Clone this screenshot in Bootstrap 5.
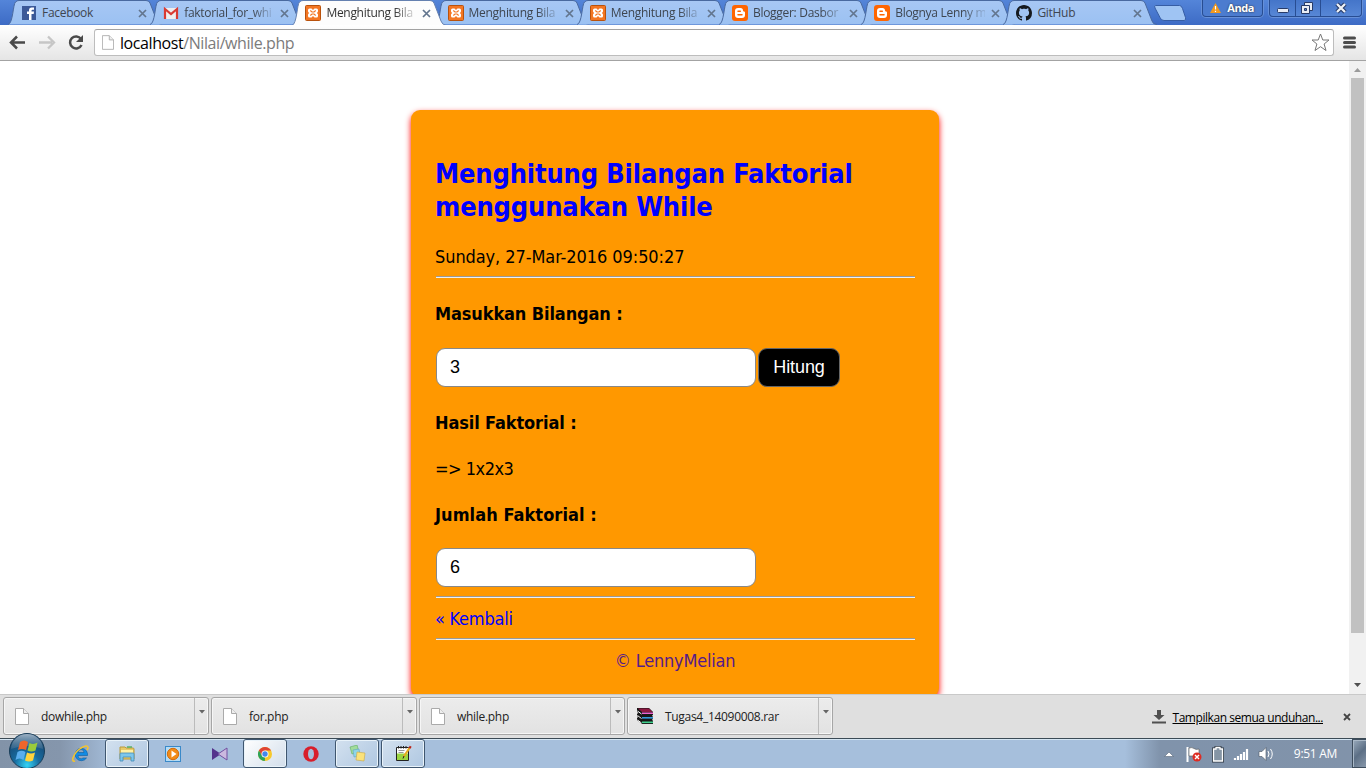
<!DOCTYPE html>
<html lang="id">
<head>
<meta charset="utf-8">
<title>Menghitung Bilangan Faktorial</title>
<link rel="stylesheet" href="https://cdn.jsdelivr.net/npm/bootstrap@5.3.0/dist/css/bootstrap.min.css">
<style>
body{width:1366px;height:768px;overflow:hidden;font-family:"Open Sans","Noto Sans",sans-serif;font-size:12px;line-height:16px;color:#000;background:#fff}
svg{display:block;flex:none}
.tabstrip{height:25px;background:linear-gradient(#5485d9,#3d6bc5);padding-left:8px}
.tab{width:158px;height:25px;margin-right:-15.8px;position:relative;padding:5px 0 0 13px;color:#3e4650}
.tab .shape{position:absolute;left:0;top:0;z-index:0}
.tab .shape path{fill:url(#tabfill);stroke:#49699f}
.tab.current{z-index:3;color:#333}
.tab.current .shape path{fill:#fdfdfd;stroke:#6581b0}
.tab>*:not(.shape){position:relative}
.tabname{width:91px;margin-left:4px;padding-left:1px;white-space:nowrap;letter-spacing:-.3px}
.fades{-webkit-mask-image:linear-gradient(90deg,#000 76%,rgba(0,0,0,.2) 97%)}
.cross{margin:4px 0 0 6px}
.anda{width:61px;height:17px;border:1px solid #284d92;border-top:0;border-radius:0 0 4px 4px;background:#4c7ccf;box-shadow:0 0 0 1px #6690d8;color:#fff;font-weight:700;font-size:11px;margin-left:16px;gap:6px;letter-spacing:-.4px;text-shadow:0 0 2px #222}
.winctl{width:93px;height:17px;border:1px solid #284d92;border-top:0;border-radius:0 0 4px 4px;background:linear-gradient(#4475c9,#5787d6);box-shadow:0 0 0 1px #6690d8;margin-left:6px}
.toolbar{height:36px;background:linear-gradient(#fff,#e5e5e5);border-bottom:1px solid #a3a3a3;padding:4px 9px 0 8px}
.omnibox{width:1240px;height:27px;border:1px solid #bdbdbd;border-top-color:#a2a2a2;border-radius:3px;background:#fff;margin-left:10px;padding:0 3px 0 7px;font-size:16px;letter-spacing:-.42px}
.address{margin-left:6px}
.urlpath{color:#7c7c7c}
.viewport{height:633px;overflow:hidden}
.scroller{width:17px;background:#f1f1f1}
.thumb{width:13px;height:555px;background:#c1c1c1}
.panel{width:528px;height:587px;margin:49px 0 0 411px;padding:47px 24px 0;background:#ff9800;border-radius:9px;box-shadow:0 3px 6px #f00;font:18px/22px "DejaVu Sans Condensed","DejaVu Sans",sans-serif;font-stretch:condensed}
.panel h1{font-size:27px;line-height:33px;font-weight:700;color:#00f;margin:0 0 23px;letter-spacing:-.16px}
.panel p{margin:0 0 24px;height:22px;white-space:nowrap;letter-spacing:-.22px}
.panel p.stamp{letter-spacing:-.08px}
.panel p.fw-bold{letter-spacing:-.12px}
.panel p.sum{letter-spacing:.06px;margin-bottom:22px}
.panel p.product{letter-spacing:-.5px}
.panel .rule{height:2px;background:linear-gradient(#9a9a9a 50%,#eee 50%);margin:8px 0 10px 1px}
.panel .rule.first{margin-bottom:25px}
.panel .rule.second{margin-top:9px}
.panel a{text-decoration:none;color:#00f}
.panel a.visited{color:#551a8b}
.field{width:320px;height:39px;border:1px solid #888;border-radius:9px;padding:0 13px;background:#fff;font:18px "Liberation Sans",sans-serif;color:#000;margin-left:1px}
.hit{width:82px;height:39px;border:1px solid #666;border-radius:9px;background:#000;color:#fff;font:18px "Liberation Sans",sans-serif;padding:0;margin-left:2px;letter-spacing:-.1px}
.shelf{height:44px;background:#dfdfdf;border-top:1px solid #c9c9c9;padding-left:3px;font-size:12px}
.dl{width:206px;height:38px;margin:2px 2px 0 0;border:1px solid #a6a6a6;border-radius:3px;background:linear-gradient(#ececec,#e2e2e2);box-shadow:inset 0 0 0 1px #f6f6f6;padding-left:11px;letter-spacing:-.3px;color:#222}
.dl .fname{padding:2px 0 0 12px}
.dl .arrow{width:14px;height:36px;border-left:1px solid #bbb;padding:12px 0 0 4px}
.showall{margin:2px 20px 0 2px;letter-spacing:-.45px}
.shut{margin-right:15px}
.taskbar{height:30px;border-top:1px solid #3b4a55;background:linear-gradient(90deg,#8293a8 0,#8596ac 60px,#a6bfdc 115px,#a6bfdc 1125px,#8093ab 1160px,#8193aa);box-shadow:inset 0 1px #d5e6f3}
.task{width:44px;height:29px;margin-right:2px}
.task.open{border:1px solid #3f566f;border-radius:3px;background:linear-gradient(135deg,#d3e1ef,#afc7e1);box-shadow:inset 0 0 0 1px #e9f3fa}
.task.front{background:linear-gradient(135deg,#fff,#d2deeb)}
.orb{margin:-7px 13px 0 8px;position:relative}
.clock{margin:0 15px 0 20px;letter-spacing:-.3px}
.peek{width:14px;height:29px;border:1px solid #3d4d5d;border-right:0;background:linear-gradient(135deg,#9aabbd,#5c6f85 50%,#8898ab);box-shadow:inset 1px 1px #a9b8c7}
</style>
</head>
<body class="d-flex flex-column">
<svg width="0" height="0" class="position-absolute">
<defs>
<linearGradient id="tabfill" x2="0" y2="1"><stop stop-color="#a7c7f4"/><stop offset="1" stop-color="#9bc1f2"/></linearGradient>
<radialGradient id="orbfill" cy=".9" r=".9"><stop stop-color="#35d4f5"/><stop offset=".4" stop-color="#176b9f"/><stop offset="1" stop-color="#183e66"/></radialGradient>
<linearGradient id="gloss" x2="0" y2="1"><stop stop-color="#e3eef5"/><stop offset="1" stop-color="#67869f" stop-opacity=".5"/></linearGradient>
<symbol id="cross" viewBox="0 0 9 9"><path d="M1 1l7 7M8 1l-7 7" stroke="#62758e" stroke-width="1.7"/></symbol>
<symbol id="xampp" viewBox="0 0 16 16"><rect x=".5" y=".5" width="15" height="15" rx="1" fill="#f37623" stroke="#b9520c"/><path d="M4.500 3.500h2L8 5l1.500-1.500h2q1.500 0 1.500 1.500v1.500L12 8l1 1.500V11q0 1.500-1.500 1.500h-2L8 11l-1.500 1.500h-2Q3 12.500 3 11V9.500L4 8 3 6.500V5q0-1.500 1.500-1.500z" fill="#fff"/><path d="M5.300 5.500L7 7h2l1.700-1.500M5.300 10.500L7 9h2l1.700 1.500" fill="none" stroke="#f37623" stroke-width="1.100"/></symbol>
<symbol id="blogger" viewBox="0 0 16 16"><rect width="16" height="16" rx="3" fill="#ff6500"/><path d="M6 3h2.500Q11 3 11 5.500q0 1 1 1t1 1V10q0 3-3 3H6q-3 0-3-3V6q0-3 3-3z" fill="#fff"/><path d="M6 6.200h2.300M6 9.800h4" stroke="#ff6500" stroke-width="1.500" stroke-linecap="round"/></symbol>
<symbol id="page" viewBox="0 0 14 17"><path d="M.5 .5h8l5 5v11H.5z" fill="#fff" stroke="#aaa"/><path d="M8.500 .5v5h5" fill="#eee" stroke="#aaa"/></symbol>
<symbol id="down" viewBox="0 0 6 4"><path d="M0 0h6L3 3.500z" fill="#666"/></symbol>
</defs>
</svg>

<header class="tabstrip d-flex">
<div class="tab d-flex"><svg class="shape" width="158" height="25"><path d="M0 24.500C5 24 5 4 7.500 2Q9 .5 11 .5H138Q141 .5 142 3L149 21Q150 24.500 154 24.500"/></svg>
<svg width="16" height="16"><rect x="1" y="1" width="14" height="14" fill="#3b5998"/><path d="M8 15V9H6V6.500h2V5.200Q8 2.500 10.700 2.500H13v2.300h-1.500q-1 0-1 1v.7H13L12.700 9h-2.200v6z" fill="#fff"/></svg><span class="tabname">Facebook</span><svg class="cross" width="9" height="9"><use href="#cross"/></svg></div>
<div class="tab d-flex"><svg class="shape" width="158" height="25"><path d="M0 24.500C5 24 5 4 7.500 2Q9 .5 11 .5H138Q141 .5 142 3L149 21Q150 24.500 154 24.500"/></svg>
<svg width="16" height="16"><rect x="1" y="3" width="14" height="11" rx="1" fill="#eee"/><path d="M2 14V4l6 5 6-5v10" fill="none" stroke="#d93a32" stroke-width="2.200"/></svg><span class="tabname fades">faktorial_for_whi</span><svg class="cross" width="9" height="9"><use href="#cross"/></svg></div>
<div class="tab current d-flex"><svg class="shape" width="158" height="25"><path d="M0 25.500C5 24 5 4 7.500 2Q9 .5 11 .5H138Q141 .5 142 3L149 21Q150 24.500 154 25.500"/></svg>
<svg width="16" height="16"><use href="#xampp"/></svg><span class="tabname fades">Menghitung Bila</span><svg class="cross" width="9" height="9"><use href="#cross"/></svg></div>
<div class="tab d-flex"><svg class="shape" width="158" height="25"><path d="M0 24.500C5 24 5 4 7.500 2Q9 .5 11 .5H138Q141 .5 142 3L149 21Q150 24.500 154 24.500"/></svg>
<svg width="16" height="16"><use href="#xampp"/></svg><span class="tabname fades">Menghitung Bila</span><svg class="cross" width="9" height="9"><use href="#cross"/></svg></div>
<div class="tab d-flex"><svg class="shape" width="158" height="25"><path d="M0 24.500C5 24 5 4 7.500 2Q9 .5 11 .5H138Q141 .5 142 3L149 21Q150 24.500 154 24.500"/></svg>
<svg width="16" height="16"><use href="#xampp"/></svg><span class="tabname fades">Menghitung Bila</span><svg class="cross" width="9" height="9"><use href="#cross"/></svg></div>
<div class="tab d-flex"><svg class="shape" width="158" height="25"><path d="M0 24.500C5 24 5 4 7.500 2Q9 .5 11 .5H138Q141 .5 142 3L149 21Q150 24.500 154 24.500"/></svg>
<svg width="16" height="16"><use href="#blogger"/></svg><span class="tabname fades">Blogger: Dasbor</span><svg class="cross" width="9" height="9"><use href="#cross"/></svg></div>
<div class="tab d-flex"><svg class="shape" width="158" height="25"><path d="M0 24.500C5 24 5 4 7.500 2Q9 .5 11 .5H138Q141 .5 142 3L149 21Q150 24.500 154 24.500"/></svg>
<svg width="16" height="16"><use href="#blogger"/></svg><span class="tabname fades">Blognya Lenny m</span><svg class="cross" width="9" height="9"><use href="#cross"/></svg></div>
<div class="tab d-flex"><svg class="shape" width="158" height="25"><path d="M0 24.500C5 24 5 4 7.500 2Q9 .5 11 .5H138Q141 .5 142 3L149 21Q150 24.500 154 24.500"/></svg>
<svg width="16" height="16" viewBox="0 0 16 16"><path fill="#15191e" d="M8 0C3.580 0 0 3.580 0 8c0 3.540 2.290 6.530 5.470 7.590.4.070.55-.17.55-.38 0-.19-.01-.82-.01-1.490-2.010.37-2.530-.49-2.690-.94-.09-.23-.48-.94-.82-1.130-.28-.15-.68-.52-.01-.53.63-.01 1.080.58 1.230.82.72 1.210 1.870.87 2.330.66.07-.52.28-.87.51-1.070-1.780-.2-3.640-.89-3.640-3.950 0-.87.31-1.590.82-2.150-.08-.2-.36-1.020.08-2.120 0 0 .67-.21 2.200.82.64-.18 1.320-.27 2-.27s1.360.09 2 .27c1.530-1.040 2.200-.82 2.200-.82.44 1.100.16 1.920.08 2.120.51.56.82 1.270.82 2.150 0 3.070-1.870 3.750-3.650 3.950.29.25.54.73.54 1.480 0 1.070-.01 1.930-.01 2.200 0 .21.15.46.55.38A8.010 8.010 0 0 0 16 8c0-4.420-3.580-8-8-8z"/></svg><span class="tabname">GitHub</span><svg class="cross" width="9" height="9"><use href="#cross"/></svg></div>
<svg width="32" height="25" class="ms-2"><path d="M1.500 5.500h24q2 0 3 3l3 9q1 3-1.500 3H10q-3 0-4-3L1 8q-1-2.500.5-2.500z" fill="#9fc4f3" stroke="#365da4"/></svg>
<div class="anda d-flex align-items-center justify-content-center"><svg width="11" height="10"><path d="M5.500 0L11 10H0z" fill="#f39a1e"/><path d="M5.500 3v3.500M5.500 7.700v1.300" stroke="#fff" stroke-width="1.200"/></svg>Anda</div>
<svg class="winctl" width="93" height="17"><path d="M25.500 0v17M50.500 0v17" stroke="#284d92"/><rect x="7.500" y="8.500" width="11" height="4" rx="1" fill="#e8edf5" stroke="#273b68"/><path d="M34.500 2.500h8v8h-8z" fill="#e8edf5" stroke="#273b68"/><path d="M31.500 5.500h8v8h-8z" fill="#e8edf5" stroke="#273b68"/><path d="M34.500 8.500h2v2h-2z" fill="#5787d6" stroke="#273b68"/><path d="M67 4l8 8M75 4l-8 8" stroke="#273b68" stroke-width="4.500"/><path d="M67 4l8 8M75 4l-8 8" stroke="#eef2f8" stroke-width="2.300"/></svg>
</header>

<div class="toolbar d-flex">
<svg width="76" height="27"><path d="M17 13.500H4M9 7.500l-6 6 6 6" fill="none" stroke="#4a4a4a" stroke-width="2.500"/><path d="M31 13.500h13M40 7.500l6 6-6 6" fill="none" stroke="#c6c6c6" stroke-width="2.300"/><path d="M73 10a6 6 0 1 0 .5 6" fill="none" stroke="#4a4a4a" stroke-width="2.500"/><path d="M75 6v7h-7z" fill="#4a4a4a"/></svg>
<div class="omnibox d-flex align-items-center"><svg width="12" height="15"><use href="#page"/></svg><span class="address flex-grow-1">localhost<span class="urlpath">/Nilai/while.php</span></span>
<svg width="19" height="19"><path d="M9.500 1l2.300 6h6.200l-4.900 4 1.900 6.500-5.500-3.800L4 17.500 5.900 11 1 7h6.200z" fill="#fff" stroke="#777"/></svg></div>
<svg width="14" height="27" class="ms-2"><path d="M2.500 9h10M2.500 13.500h10M2.500 18h10" stroke="#4c4c4c" stroke-width="3" stroke-linecap="round"/></svg>
</div>

<main class="viewport d-flex justify-content-between">
<section class="panel">
<h1>Menghitung Bilangan Faktorial<br>menggunakan While</h1>
<p class="stamp mb-2">Sunday, 27-Mar-2016 09:50:27</p>
<div class="rule first"></div>
<p class="fw-bold" style="margin-bottom:23px">Masukkan Bilangan :</p>
<form class="d-flex" style="margin-bottom:25px"><input class="field" value="3"><button type="button" class="hit">Hitung</button></form>
<p class="fw-bold">Hasil Faktorial :</p>
<p class="product">=&gt; 1x2x3</p>
<p class="fw-bold sum">Jumlah Faktorial :</p>
<input class="field d-block" value="6">
<div class="rule second"></div>
<p class="mb-2"><a href="#">« Kembali</a></p>
<div class="rule"></div>
<p class="text-center"><a class="visited" href="#">© LennyMelian</a></p>
</section>
<aside class="scroller d-flex flex-column align-items-center"><svg width="17" height="17"><path d="M5 11h7L8.500 7z" fill="#9b9b9b"/></svg><div class="thumb"></div><svg width="17" height="17" class="mt-auto"><path d="M5 6h7l-3.500 4z" fill="#505050"/></svg></aside>
</main>

<div class="shelf d-flex">
<div class="dl d-flex align-items-center"><svg width="14" height="17"><use href="#page"/></svg><span class="fname flex-grow-1">dowhile.php</span><div class="arrow"><svg width="6" height="4"><use href="#down"/></svg></div></div>
<div class="dl d-flex align-items-center"><svg width="14" height="17"><use href="#page"/></svg><span class="fname flex-grow-1">for.php</span><div class="arrow"><svg width="6" height="4"><use href="#down"/></svg></div></div>
<div class="dl d-flex align-items-center"><svg width="14" height="17"><use href="#page"/></svg><span class="fname flex-grow-1">while.php</span><div class="arrow"><svg width="6" height="4"><use href="#down"/></svg></div></div>
<div class="dl d-flex align-items-center" style="padding-left:9px"><svg width="16" height="17"><path d="M0 0h12l4 4v3l-1 .5 1 1.500v2l-1 .5 1 1.500v3H5l-5-4v-2l1-1-1-1.500V6l1-1-1-2z" fill="#171717"/><path d="M1 .5h11l3.500 3.500H5z" fill="#8b1740"/><path d="M5 4.500h11V6H5z" fill="#ee62cf"/><path d="M5 9h11v1.600H5z" fill="#3599dc"/><path d="M5 13.500h11v1.600H5z" fill="#3fd08d"/><path d="M.5 3l4 3M.5 7.500l4 3M.5 12l4 3" stroke="#f6f6f6"/></svg><span class="fname flex-grow-1">Tugas4_14090008.rar</span><div class="arrow"><svg width="6" height="4"><use href="#down"/></svg></div></div>
<div class="ms-auto d-flex align-items-center"><svg width="14" height="14" class="me-1"><path d="M5 0h4v5h3.500L7 10 1.500 5H5zM0 11.500h14v2H0z" fill="#505050"/></svg><u class="showall">Tampilkan semua unduhan...</u><svg class="shut" width="8" height="8"><path d="M1 1l6 6M7 1L1 7" stroke="#444" stroke-width="1.800"/></svg></div>
</div>

<footer class="taskbar d-flex">
<svg class="orb" width="38" height="37"><circle cx="19" cy="19" r="17.500" fill="url(#orbfill)" stroke="#193e59"/><path d="M3 17a16 15 0 0 1 32 0q-16-6-32 0z" fill="url(#gloss)" opacity=".65"/><path d="M12 10q4-3 8 0l-2 8q-4-2-8 0z" fill="#f0652b"/><path d="M21.500 11q4 2 8-.5l-2 8q-4 2-8 0z" fill="#9acb3b"/><path d="M9.500 20q4-2.500 8 0l-2 8q-4-3-8 0z" fill="#5aaeee"/><path d="M19 20.500q4 2 8 0l-2 8q-4 2-8 0z" fill="#ffd33c"/></svg>
<div class="task d-flex align-items-center justify-content-center"><svg width="18" height="18"><path d="M15.500 8.500a6.200 6.200 0 1 0-1 4.500h-3.500a3 3 0 0 1-5-2.500h9.500zM6 7.500a3 3 0 0 1 6 0z" fill="#138be4" stroke="#0c5d9f" stroke-width=".6"/><path d="M3 16q-3 1-2-3Q3 7 9 3q6-3.500 7-1 .5 1-1 3" fill="none" stroke="#f5c52c" stroke-width="1.500"/></svg></div>
<div class="task open d-flex align-items-center justify-content-center"><svg width="18" height="17"><path d="M2 2h5l1 1h7q1 0 1 1v10H2z" fill="#e8cb68" stroke="#b99a3c"/><path d="M3 5h12v5H3z" fill="#fff0a5"/><path d="M9 2h5" stroke="#4dac54" stroke-width="1.300"/><path d="M2 9q0-1 1-1h12q1 0 1 1v7h-3v-4H5v4H2z" fill="#7dc7ec" stroke="#458bb6" stroke-width=".8"/></svg></div>
<div class="task d-flex align-items-center justify-content-center"><svg width="16" height="16"><rect x=".5" y=".5" width="15" height="15" fill="#b5dcf5" stroke="#3a89c9"/><circle cx="8" cy="8" r="5.700" fill="#f28b17" stroke="#d36b0b"/><path d="M6.500 4.500L11.500 8l-5 3.500z" fill="#fff"/></svg></div>
<div class="task d-flex align-items-center justify-content-center"><svg width="17" height="16"><path d="M1 2l9 6-9 6z" fill="#54338c"/><path d="M16 2L7 8l9 6z" fill="#cbb9df" stroke="#7250a1"/></svg></div>
<div class="task open front d-flex align-items-center justify-content-center"><svg width="16" height="16"><circle cx="8" cy="8" r="7" fill="#f7c92c"/><path d="M1.900 4.500A7 7 0 0 1 14.100 4.500H8L5 9.700z" fill="#df4435"/><path d="M1.900 4.500L5 9.700 8 11.500 7.800 15A7 7 0 0 1 1.900 4.500z" fill="#2ba35a"/><circle cx="8" cy="8" r="3.500" fill="#fff"/><circle cx="8" cy="8" r="2.700" fill="#4387ed"/></svg></div>
<div class="task d-flex align-items-center justify-content-center"><svg width="16" height="16"><ellipse cx="8" cy="8" rx="7.700" ry="7.800" fill="#d81e2b"/><ellipse cx="8" cy="8" rx="3" ry="5.300" fill="#a6bfdc"/></svg></div>
<div class="task open d-flex align-items-center justify-content-center"><svg width="17" height="17"><path d="M1 2l7-2 2 7-7 2z" fill="#a1dc9b" stroke="#5fae60" stroke-width=".6"/><path d="M4 5l6-1 1 7-6 1z" fill="#8ed5ea" stroke="#60a4c0" stroke-width=".6"/><path d="M8 7l8 1-1 8-8-1z" fill="#fbe27a" stroke="#c6a84a" stroke-width=".6"/></svg></div>
<div class="task open d-flex align-items-center justify-content-center"><svg width="17" height="17"><path d="M1.500 2.500h12v13h-12z" fill="#fff" stroke="#222"/><path d="M2 8.500h11V15H2z" fill="#9bd641"/><path d="M3.500 5.500h6M3.500 7.500h5" stroke="#999"/><path d="M3.500 1v2.500M6 1v2.500M8.500 1v2.500M11 1v2.500" stroke="#222"/><path d="M14.500 3L8.500 12" stroke="#e8ac21" stroke-width="2.200"/><path d="M15.700 1.200l-1.200 2" stroke="#ba2119" stroke-width="2.200"/><path d="M9 11l-1 2.500" stroke="#222"/></svg></div>
<div class="ms-auto d-flex align-items-center text-white">
<svg width="113" height="20"><path d="M3.500 12.500h9L8 8z" fill="#fff" stroke="#566678" stroke-width=".6"/><path d="M26.500 3v15" stroke="#fff" stroke-width="2"/><path d="M28 4q3-1 5 .5t5 .5v7h-10z" fill="#fff" stroke="#555" stroke-width=".6"/><circle cx="36" cy="13" r="4.500" fill="#de2c24"/><path d="M34 11l4 4M38 11l-4 4" stroke="#fff" stroke-width="1.400"/><path d="M55 3.500h4V5h2.500v12h-9V5H55z" fill="none" stroke="#303b46" stroke-width="3"/><path d="M55 3.500h4V5h2.500v12h-9V5H55z" fill="#8595a5" stroke="#fff" stroke-width="1.300"/><path d="M74 16v-2M77 16v-4M80 16v-6M83 16V8M86 16V5" stroke="#fff" stroke-width="2.200"/><path d="M98 7.500h3l4-4v13l-4-4h-3z" fill="#fff" stroke="#4a5662" stroke-width=".6"/><path d="M107 7q2 3 0 6M109.500 5q3.500 5 0 10" fill="none" stroke="#fff"/></svg>
<span class="clock">9:51 AM</span><div class="peek"></div></div>
</footer>
<script src="https://cdn.jsdelivr.net/npm/bootstrap@5.3.0/dist/js/bootstrap.bundle.min.js"></script>
</body>
</html>
